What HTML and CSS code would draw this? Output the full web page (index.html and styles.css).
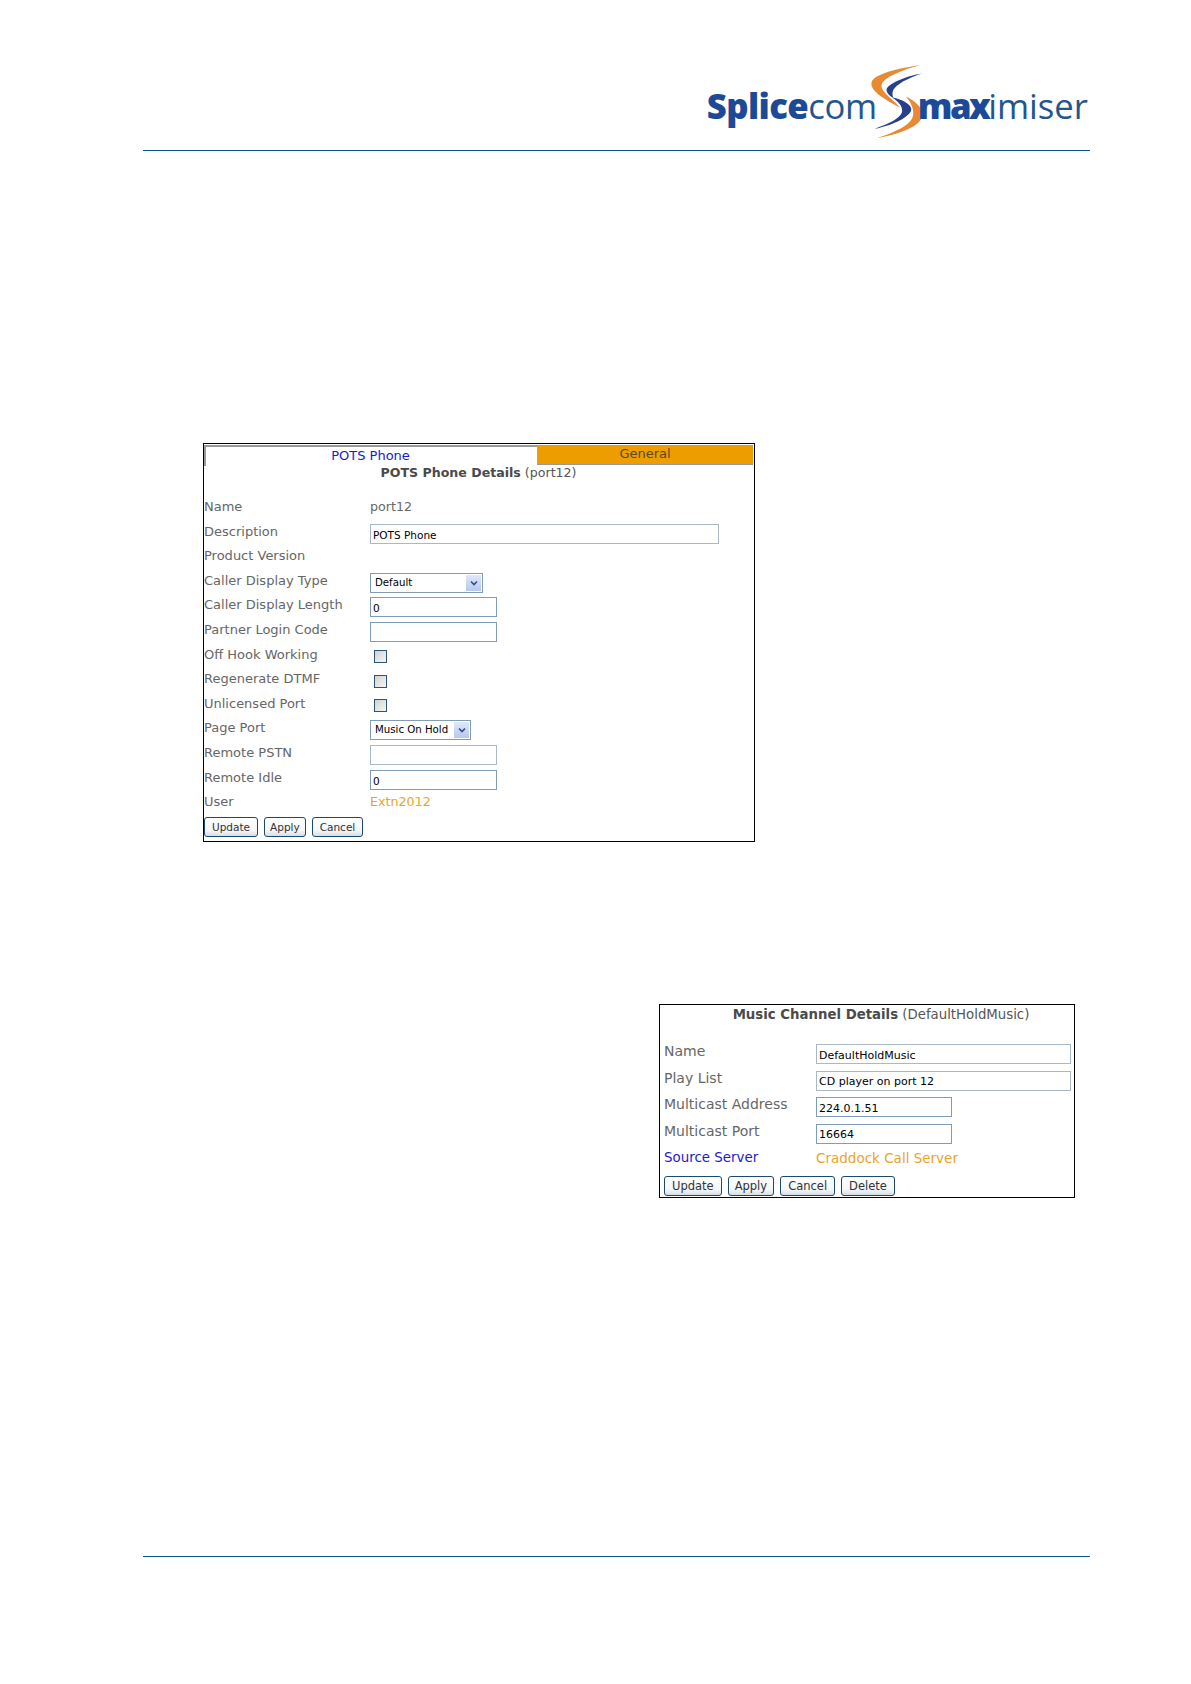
FILE: index.html
```html
<!DOCTYPE html>
<html lang="en">
<head>
<meta charset="utf-8">
<title>POTS Phone Details</title>
<link rel="stylesheet" href="styles.css">
</head>
<body>
<div class="page">
  <header class="head">
    <div class="logo">
      <span class="lg-b">Splice</span><span class="lg-r">com</span>
      <svg class="swoosh" viewBox="0 0 150 220" aria-hidden="true">
        <path fill="#e88a34" d="M145 3C85 12 5 28 0 55C-3 80 40 105 85 128C60 100 25 80 30 60C35 40 95 15 145 3Z"/>
        <path fill="#27408b" d="M148 28C105 35 55 55 45 72C42 82 50 92 65 100C58 85 62 72 80 60C95 48 125 36 148 28Z"/>
        <path fill="#27408b" d="M60 98C100 105 125 125 115 140C100 165 40 185 10 190C50 175 85 160 90 140C92 125 80 110 60 98Z"/>
        <path fill="#e88a34" d="M100 95C135 110 155 135 148 155C140 190 60 210 15 218C65 200 118 180 122 150C125 130 115 110 100 95Z"/>
      </svg>
      <span class="lg-b lg-max">max</span><span class="lg-r lg-imiser">imiser</span>
    </div>
  </header>

  <section class="panel panel-pots">
    <div class="tabs">
      <div class="tab tab-on">POTS Phone</div>
      <div class="tab tab-off">General</div>
    </div>
    <h2 class="title title-pots"><b>POTS Phone Details</b> (port12)</h2>
    <div class="form form-pots">
      <div class="lab">Name</div><div class="val"><span class="plain">port12</span></div>
      <div class="lab">Description</div><div class="val"><input class="inp inp-soft w-long" value="POTS Phone"></div>
      <div class="lab">Product Version</div><div class="val"></div>
      <div class="lab">Caller Display Type</div><div class="val"><div class="sel w-sel1"><span>Default</span><i class="arrow"><svg viewBox="0 0 8 6"><path d="M1 1.5L4 4.5L7 1.5" fill="none" stroke="#2c4d8c" stroke-width="1.6"/></svg></i></div></div>
      <div class="lab">Caller Display Length</div><div class="val"><input class="inp w-short" value="0"></div>
      <div class="lab">Partner Login Code</div><div class="val"><input class="inp w-short" value=""></div>
      <div class="lab">Off Hook Working</div><div class="val"><span class="chk"></span></div>
      <div class="lab">Regenerate DTMF</div><div class="val"><span class="chk"></span></div>
      <div class="lab">Unlicensed Port</div><div class="val"><span class="chk"></span></div>
      <div class="lab">Page Port</div><div class="val"><div class="sel w-sel2"><span>Music On Hold</span><i class="arrow"><svg viewBox="0 0 8 6"><path d="M1 1.5L4 4.5L7 1.5" fill="none" stroke="#2c4d8c" stroke-width="1.6"/></svg></i></div></div>
      <div class="lab">Remote PSTN</div><div class="val"><input class="inp inp-soft w-short" value=""></div>
      <div class="lab">Remote Idle</div><div class="val"><input class="inp w-short" value="0"></div>
      <div class="lab">User</div><div class="val"><span class="orange">Extn2012</span></div>
    </div>
    <div class="btns btns-pots">
      <button class="btn">Update</button><button class="btn btn-apply">Apply</button><button class="btn">Cancel</button>
    </div>
  </section>

  <section class="panel panel-music">
    <h2 class="title title-music"><b>Music Channel Details</b> (DefaultHoldMusic)</h2>
    <div class="form form-music">
      <div class="lab">Name</div><div class="val"><input class="inp inp-soft w-m-long" value="DefaultHoldMusic"></div>
      <div class="lab">Play List</div><div class="val"><input class="inp inp-soft w-m-long" value="CD player on port 12"></div>
      <div class="lab">Multicast Address</div><div class="val"><input class="inp w-m-short" value="224.0.1.51"></div>
      <div class="lab">Multicast Port</div><div class="val"><input class="inp w-m-short" value="16664"></div>
      <div class="lab blue">Source Server</div><div class="val"><span class="orange">Craddock Call Server</span></div>
    </div>
    <div class="btns btns-music">
      <button class="btn">Update</button><button class="btn btn-apply">Apply</button><button class="btn">Cancel</button><button class="btn">Delete</button>
    </div>
  </section>

  <footer class="foot"></footer>
</div>
</body>
</html>
```

FILE: styles.css
```css
* { box-sizing: border-box; }
html, body { margin: 0; padding: 0; background: #fff; }
body { font-family: "DejaVu Sans", Verdana, sans-serif; color: #666; }
.page { width: 1191px; height: 1684px; padding: 0 101px 0 143px; }

.head { height: 151px; border-bottom: 1px solid #0f5490; display: flex; justify-content: flex-end; align-items: flex-end; padding-bottom: 6px; }
.logo { display: flex; align-items: center; height: 76px; color: #1d4a96; font-family: "Open Sans", sans-serif; font-size: 34.7px; line-height: 1; padding-right: 2px; }
.lg-b { font-weight: 800; letter-spacing: -0.6px; }
.lg-max { letter-spacing: -2.6px; }
.lg-r { font-weight: 400; letter-spacing: -0.3px; color: #25558f; }
.lg-imiser { letter-spacing: 0; }
.swoosh { width: 54px; height: 75px; margin: -10px -6px 0 -7px; flex: none; }

.panel { border: 1px solid #000; background: #fff; }
.panel-pots { width: 552px; height: 399px; margin: 292px 0 0 60px; padding: 1px 1px 1px 0; }
.panel-music { width: 416px; height: 194px; margin: 162px 0 0 516px; padding: 0 4px; }

.tabs { display: flex; height: 20px; }
.tab { font-size: 13px; text-align: center; line-height: 18px; }
.tab-on { width: 333px; color: #1a1acb; border-top: 2px solid #999; border-left: 2px solid #999; padding-right: 2px; height: 21px; }
.tab-off { flex: 1; background: #ee9d00; color: #5a4a20; border-bottom: 1px solid #999; }

.title { margin: 0; font-weight: 400; text-align: center; line-height: 16px; color: #555; }
.title b { color: #4a4a4a; }
.title-pots { font-size: 12.6px; }
.title-music { font-size: 13.3px; padding: 2px 0 0 28px; }

.form { display: grid; }
.form-pots { grid-template-columns: 166px 1fr; grid-auto-rows: 24.6px; margin-top: 16px; }
.form-music { grid-template-columns: 152px 1fr; grid-auto-rows: 26.6px; margin-top: 19px; }

.lab { font-size: 13px; line-height: 20px; color: #666; white-space: nowrap; }
.form-music .lab { font-size: 14px; line-height: 18px; }
.form-music .blue { color: #1c1cc8; font-size: 13.4px; line-height: 20px; }
.val { font-size: 12.7px; line-height: 20px; }
.form-music .val { font-size: 13.5px; line-height: 20px; }
.form-music .val .inp { line-height: normal; }
.plain { color: #666; }
.orange { color: #e8a52a; }

.inp { display: block; height: 20px; margin-top: 2px; padding: 2px 2px 0; border: 1px solid #7f9db9; font: 10.5px "DejaVu Sans", Verdana, sans-serif; color: #000; background: #fff; outline: 0; }
.inp-soft { border-color: #aab8c6; }
.form-music .inp { font-size: 11px; }
.w-long { width: 349px; }
.w-short { width: 127px; }
.w-m-long { width: 255px; }
.w-m-short { width: 136px; }

.sel { display: flex; align-items: center; justify-content: space-between; height: 20px; margin-top: 2px; padding: 1px 1px 1px 4px; border: 1px solid #7f9db9; font-size: 10.2px; color: #000; }
.w-sel1 { width: 113px; }
.w-sel2 { width: 101px; }
.arrow { display: flex; align-items: center; justify-content: center; width: 15px; height: 100%; background: linear-gradient(#dfe8f8, #b5c8ee); }
.arrow svg { width: 8px; height: 6px; }

.chk { display: block; width: 13px; height: 13px; margin: 5.5px 0 0 4px; border: 1px solid #2c5478; background: linear-gradient(135deg, #d2d2ce, #f6f6f4); }

.btns { display: flex; }
.btns-pots { gap: 6px; }
.btns-music { gap: 6px; margin-top: 1px; }
.btn { height: 20px; padding: 0 7px; border: 1px solid #1b4a6e; border-radius: 3px; background: linear-gradient(#fff, #f4f6f8 70%, #d6dee6); font: 10.5px "DejaVu Sans", Verdana, sans-serif; color: #333; }
.btn-apply { padding: 0 5px; }
.btns-music .btn { font-size: 11.5px; }
.btns-music .btn-apply { padding: 0 6px; }

.foot { height: 1px; background: #0f5490; margin-top: 358px; }
```
